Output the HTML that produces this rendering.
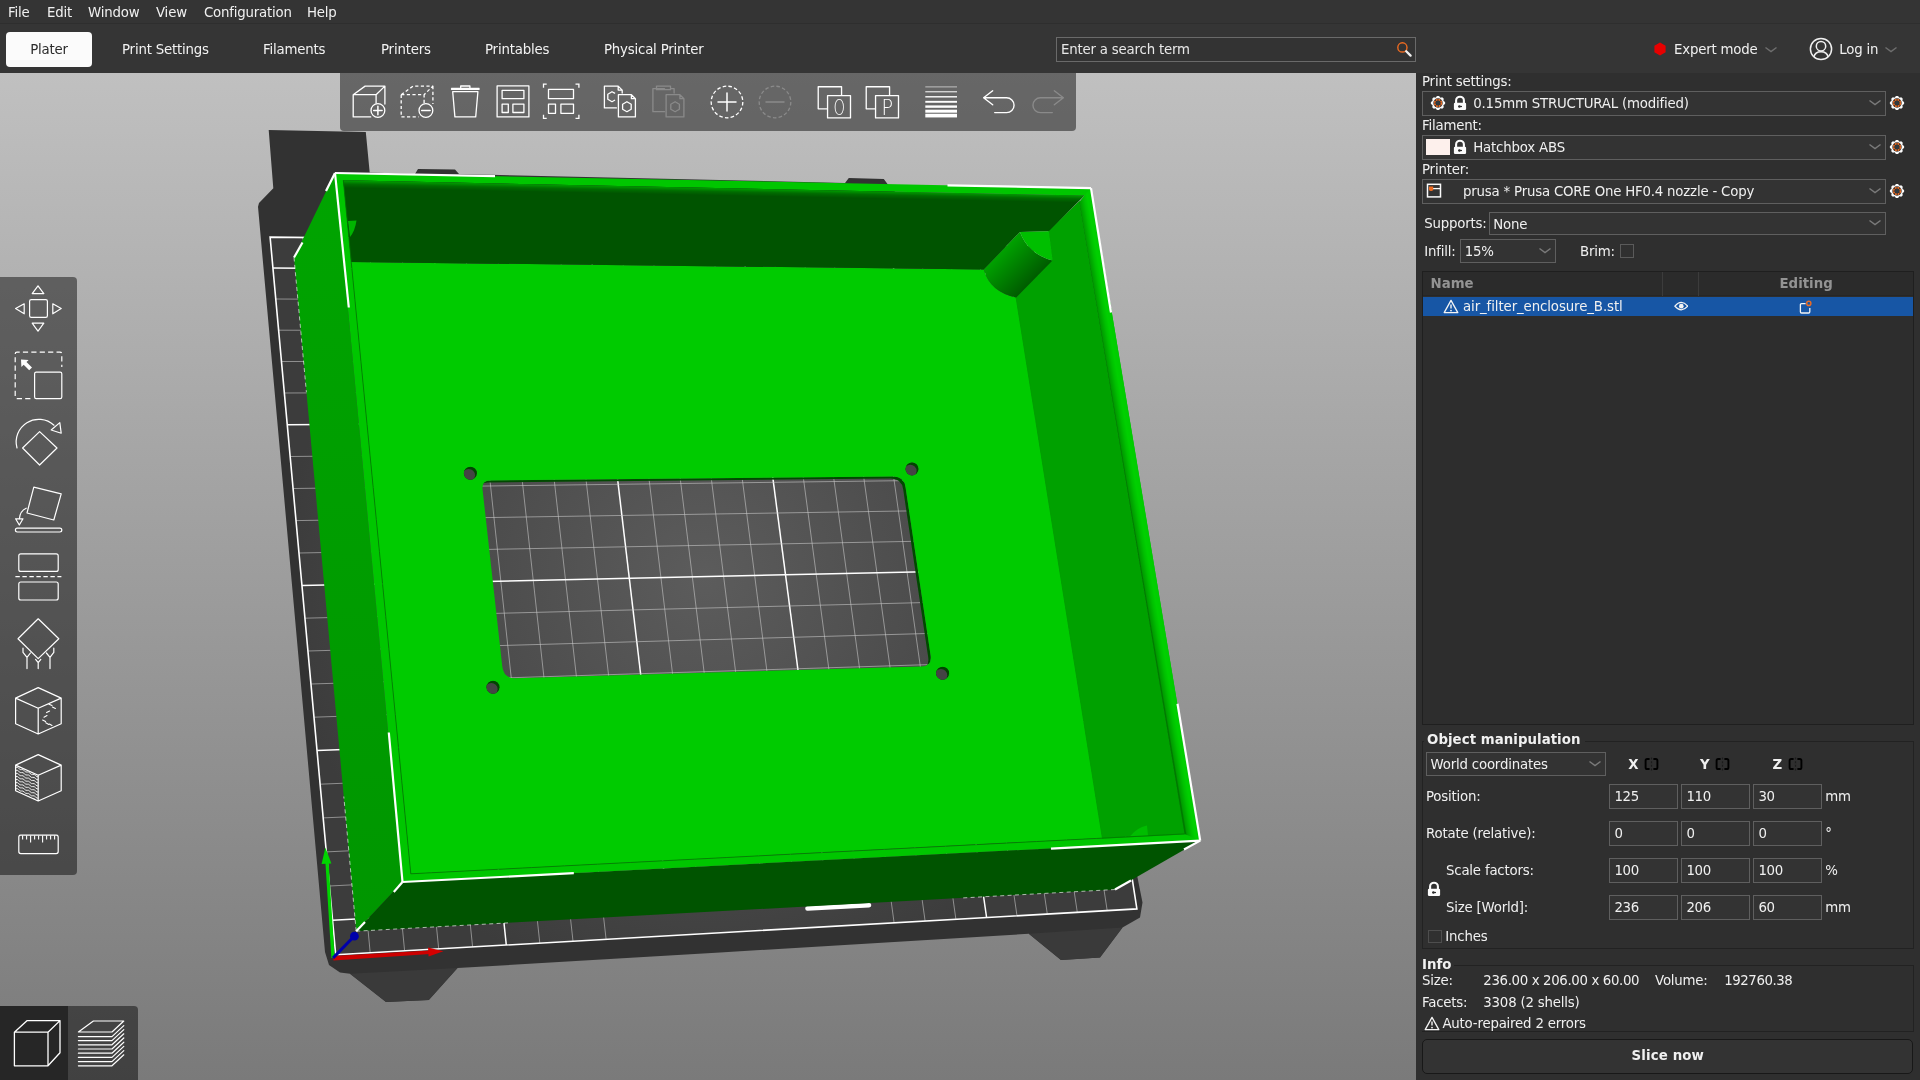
<!DOCTYPE html>
<html><head><meta charset="utf-8"><title>PrusaSlicer</title>
<style>
*{box-sizing:border-box;margin:0;padding:0}
html,body{width:1920px;height:1080px;overflow:hidden;background:#2f2f2f}
body{font-family:"DejaVu Sans","Liberation Sans",sans-serif;font-size:13.333px;letter-spacing:-0.2px;color:#f0f0f0;position:relative}
.abs{position:absolute}
#menubar,#tabbar,#view,#panel{will-change:transform}
#menubar{left:0;top:0;width:1920px;height:24px;background:#343434;border-bottom:1px solid #2e2e2e}
#menubar span{position:absolute;top:5px;line-height:16px;white-space:nowrap}
#tabbar{left:0;top:24px;width:1920px;height:48.7px;background:#353535;z-index:3}
.tab{position:absolute;top:8px;height:35px;line-height:35.8px;text-align:center;white-space:nowrap;color:#f2f2f2}
.tab.sel{background:#fbfbfb;color:#2b2b2b;border-radius:4px}
#view{left:0;top:72px;width:1416px;height:1008px;background:linear-gradient(#c0c0c0,#7a7a7a);overflow:hidden}
#scene{position:absolute;left:0;top:0}
#ttool{left:340px;top:0;width:736px;height:58.5px;background:rgba(0,0,0,.462);border-radius:0 0 4px 4px}
#ltool{left:0;top:205.2px;width:77px;height:598px;background:rgba(0,0,0,.462);border-radius:0 4px 4px 0}
#btool{left:0;top:934px;width:137.5px;height:74px;background:rgba(0,0,0,.462);border-radius:0 4px 0 0;overflow:hidden}
#btool .s{position:absolute;left:0;top:0;width:68px;height:74px;background:#262626}
#panel{left:1416px;top:72px;width:504px;height:1008px;background:#2f2f2f}
.lbl{position:absolute;white-space:nowrap;line-height:16px}
.combo{position:absolute;border:1px solid #5f5f5f;background:#333333;height:24px}
.combo .t{position:absolute;top:3px;line-height:16px;white-space:nowrap}
.inp{position:absolute;border:1px solid #5f5f5f;background:#333333;height:24px;width:70px}
.inp span{position:absolute;left:5px;top:3px;line-height:16px}
.b{font-weight:bold;letter-spacing:0}
.num{letter-spacing:-0.46px}
</style></head><body>
<div id="menubar" class="abs">
<span style="left:8px">File</span><span style="left:47px">Edit</span><span style="left:88px">Window</span><span style="left:156px">View</span><span style="left:204px">Configuration</span><span style="left:307px">Help</span>
</div>
<div id="tabbar" class="abs">
<div class="tab sel" style="left:6px;width:86px">Plater</div>
<div class="tab" style="left:122px">Print Settings</div>
<div class="tab" style="left:263px">Filaments</div>
<div class="tab" style="left:381px">Printers</div>
<div class="tab" style="left:485px">Printables</div>
<div class="tab" style="left:604px">Physical Printer</div>
<div class="abs" style="left:1056px;top:13px;width:360px;height:25px;border:1px solid #6a6a6a;background:#333"><span class="abs" style="left:4px;top:4px;line-height:16px;color:#e8e8e8">Enter a search term</span>
<svg class="abs" style="left:338px;top:2px" width="20" height="20" viewBox="0 0 20 20"><circle cx="7.4" cy="7.4" r="4.6" fill="none" stroke="#ed6b21" stroke-width="1.4"/><line x1="11.2" y1="11.2" x2="15.6" y2="15.6" stroke="#f0f0f0" stroke-width="2.3" stroke-linecap="round"/></svg></div>
<svg class="abs" style="left:1653px;top:18px" width="14" height="14" viewBox="0 0 14 14"><polygon points="7,0.6 12.6,3.8 12.6,10.2 7,13.4 1.4,10.2 1.4,3.8" fill="#e70000"/></svg>
<span class="lbl" style="left:1674px;top:18px">Expert mode</span>
<svg class="abs" style="left:1764px;top:22px" width="14" height="8" viewBox="0 0 14 8"><polyline points="1.5,1.5 7,5.5 12.5,1.5" fill="none" stroke="#6e6e6e" stroke-width="1.5"/></svg>
<svg class="abs" style="left:1808px;top:12px" width="26" height="26" viewBox="0 0 26 26"><circle cx="13" cy="13" r="10.6" fill="none" stroke="#f0f0f0" stroke-width="1.5"/><circle cx="13" cy="10.2" r="4.7" fill="none" stroke="#f0f0f0" stroke-width="1.5"/><path d="M5.9,21 C6.6,17.2 9.2,15.7 13,15.7 C16.8,15.7 19.4,17.2 20.1,21" fill="none" stroke="#f0f0f0" stroke-width="1.5"/></svg>
<span class="lbl" style="left:1839.3px;top:18px">Log in</span>
<svg class="abs" style="left:1884px;top:22px" width="14" height="8" viewBox="0 0 14 8"><polyline points="1.5,1.5 7,5.5 12.5,1.5" fill="none" stroke="#6e6e6e" stroke-width="1.5"/></svg>
</div>
<div id="view" class="abs">
<svg id="scene" width="1416" height="1008" viewBox="0 0 1416 1008">
<defs>
<radialGradient id="bedg" gradientUnits="userSpaceOnUse" cx="705" cy="505" r="420"><stop offset="0" stop-color="#5c5c5c"/><stop offset="0.6" stop-color="#4a4a4a"/><stop offset="1" stop-color="#3c3c3c"/></radialGradient>
<linearGradient id="leftg" x1="0" y1="0" x2="0" y2="1"><stop offset="0" stop-color="#00a400"/><stop offset="1" stop-color="#009600"/></linearGradient>
<linearGradient id="postg" gradientUnits="userSpaceOnUse" x1="1000" y1="175" x2="1040" y2="215"><stop offset="0" stop-color="#00a800"/><stop offset="1" stop-color="#004c00"/></linearGradient>
<linearGradient id="rimr" gradientUnits="userSpaceOnUse" x1="1107.3" y1="298" x2="1120.9" y2="295.7"><stop offset="0" stop-color="#007a00"/><stop offset="0.08" stop-color="#009c00"/><stop offset="0.42" stop-color="#00c000"/><stop offset="0.66" stop-color="#00d000"/><stop offset="1" stop-color="#00cb00"/></linearGradient>
<linearGradient id="bwg" gradientUnits="userSpaceOnUse" x1="700" y1="115.5" x2="699.85" y2="123"><stop offset="0" stop-color="#00a000"/><stop offset="0.5" stop-color="#006c00"/><stop offset="1" stop-color="#005400"/></linearGradient>
<clipPath id="bedclip"><polygon points="335.7,882.8 1136.9,836.9 1033.9,173.5 270.1,165.1"/></clipPath>
</defs>
<polygon points="268.7,58.0 365.8,60.0 369.7,100.5 415.0,102.0 418.0,97.0 455.0,97.5 459.0,102.0 845.0,111.0 848.8,106.0 883.8,107.0 887.5,112.0 1000.0,228.0 1137.5,805.5 1142.5,830.5 1140.0,845.5 1122.5,855.5 1100.0,885.5 1061.0,888.0 1028.8,861.8 720.0,880.5 457.5,896.0 428.8,928.0 386.0,930.0 350.0,901.8 340.0,900.5 329.0,893.0 325.0,880.0 258.0,134.7 259.0,131.0 273.3,116.3" fill="#323232"/>
<polygon points="350.0,901.8 386.0,930.0 428.8,928.0 457.5,896.0" fill="#3a3a3a"/>
<polygon points="1028.8,861.8 1061.0,888.0 1100.0,885.5 1122.5,855.5" fill="#3a3a3a"/>
<polygon points="335.7,882.8 1136.9,836.9 1033.9,173.5 270.1,165.1" fill="url(#bedg)"/>
<g clip-path="url(#bedclip)">
<line x1="370.2" y1="880.8" x2="302.9" y2="165.5" stroke="#c8c8c8" stroke-width="0.8" stroke-opacity="0.75"/>
<line x1="404.6" y1="878.8" x2="335.6" y2="165.9" stroke="#c8c8c8" stroke-width="0.8" stroke-opacity="0.75"/>
<line x1="438.7" y1="876.9" x2="368.0" y2="166.2" stroke="#c8c8c8" stroke-width="0.8" stroke-opacity="0.75"/>
<line x1="472.6" y1="874.9" x2="400.2" y2="166.6" stroke="#c8c8c8" stroke-width="0.8" stroke-opacity="0.75"/>
<line x1="506.3" y1="873.0" x2="432.2" y2="166.9" stroke="#ffffff" stroke-width="1.5" stroke-opacity="1"/>
<line x1="539.8" y1="871.1" x2="464.0" y2="167.3" stroke="#c8c8c8" stroke-width="0.8" stroke-opacity="0.75"/>
<line x1="573.0" y1="869.2" x2="495.7" y2="167.6" stroke="#c8c8c8" stroke-width="0.8" stroke-opacity="0.75"/>
<line x1="606.1" y1="867.3" x2="527.1" y2="168.0" stroke="#c8c8c8" stroke-width="0.8" stroke-opacity="0.75"/>
<line x1="634.2" y1="825.3" x2="558.4" y2="168.3" stroke="#c8c8c8" stroke-width="0.8" stroke-opacity="0.75"/>
<line x1="666.8" y1="823.6" x2="589.4" y2="168.6" stroke="#ffffff" stroke-width="1.5" stroke-opacity="1"/>
<line x1="699.1" y1="821.8" x2="620.3" y2="169.0" stroke="#c8c8c8" stroke-width="0.8" stroke-opacity="0.75"/>
<line x1="731.2" y1="820.1" x2="651.0" y2="169.3" stroke="#c8c8c8" stroke-width="0.8" stroke-opacity="0.75"/>
<line x1="763.1" y1="818.4" x2="681.5" y2="169.6" stroke="#c8c8c8" stroke-width="0.8" stroke-opacity="0.75"/>
<line x1="794.8" y1="816.7" x2="711.9" y2="170.0" stroke="#c8c8c8" stroke-width="0.8" stroke-opacity="0.75"/>
<line x1="826.4" y1="815.1" x2="742.0" y2="170.3" stroke="#ffffff" stroke-width="1.5" stroke-opacity="1"/>
<line x1="857.7" y1="813.4" x2="772.0" y2="170.6" stroke="#c8c8c8" stroke-width="0.8" stroke-opacity="0.75"/>
<line x1="894.1" y1="850.8" x2="801.8" y2="170.9" stroke="#c8c8c8" stroke-width="0.8" stroke-opacity="0.75"/>
<line x1="925.1" y1="849.0" x2="831.4" y2="171.3" stroke="#c8c8c8" stroke-width="0.8" stroke-opacity="0.75"/>
<line x1="955.9" y1="847.3" x2="860.8" y2="171.6" stroke="#c8c8c8" stroke-width="0.8" stroke-opacity="0.75"/>
<line x1="986.6" y1="845.5" x2="890.1" y2="171.9" stroke="#ffffff" stroke-width="1.5" stroke-opacity="1"/>
<line x1="1017.0" y1="843.8" x2="919.2" y2="172.2" stroke="#c8c8c8" stroke-width="0.8" stroke-opacity="0.75"/>
<line x1="1047.3" y1="842.0" x2="948.1" y2="172.5" stroke="#c8c8c8" stroke-width="0.8" stroke-opacity="0.75"/>
<line x1="1077.3" y1="840.3" x2="976.9" y2="172.9" stroke="#c8c8c8" stroke-width="0.8" stroke-opacity="0.75"/>
<line x1="1107.2" y1="838.6" x2="1005.5" y2="173.2" stroke="#c8c8c8" stroke-width="0.8" stroke-opacity="0.75"/>
<line x1="332.5" y1="848.3" x2="1132.0" y2="805.2" stroke="#ffffff" stroke-width="1.5" stroke-opacity="1"/>
<line x1="329.4" y1="814.0" x2="1127.1" y2="773.6" stroke="#c8c8c8" stroke-width="0.8" stroke-opacity="0.75"/>
<line x1="326.3" y1="779.9" x2="1122.2" y2="742.1" stroke="#c8c8c8" stroke-width="0.8" stroke-opacity="0.75"/>
<line x1="323.2" y1="745.9" x2="1117.3" y2="710.9" stroke="#c8c8c8" stroke-width="0.8" stroke-opacity="0.75"/>
<line x1="320.1" y1="712.2" x2="1112.5" y2="679.7" stroke="#c8c8c8" stroke-width="0.8" stroke-opacity="0.75"/>
<line x1="317.0" y1="678.6" x2="1107.7" y2="648.8" stroke="#ffffff" stroke-width="1.5" stroke-opacity="1"/>
<line x1="314.0" y1="645.2" x2="1102.9" y2="618.0" stroke="#c8c8c8" stroke-width="0.8" stroke-opacity="0.75"/>
<line x1="310.9" y1="612.0" x2="1098.1" y2="587.3" stroke="#c8c8c8" stroke-width="0.8" stroke-opacity="0.75"/>
<line x1="307.9" y1="579.0" x2="1093.4" y2="556.8" stroke="#c8c8c8" stroke-width="0.8" stroke-opacity="0.75"/>
<line x1="304.9" y1="546.2" x2="1088.7" y2="526.4" stroke="#c8c8c8" stroke-width="0.8" stroke-opacity="0.75"/>
<line x1="301.9" y1="513.5" x2="1084.0" y2="496.2" stroke="#ffffff" stroke-width="1.5" stroke-opacity="1"/>
<line x1="299.0" y1="481.0" x2="1079.3" y2="466.2" stroke="#c8c8c8" stroke-width="0.8" stroke-opacity="0.75"/>
<line x1="296.0" y1="448.6" x2="1074.7" y2="436.3" stroke="#c8c8c8" stroke-width="0.8" stroke-opacity="0.75"/>
<line x1="293.1" y1="416.5" x2="1070.1" y2="406.5" stroke="#c8c8c8" stroke-width="0.8" stroke-opacity="0.75"/>
<line x1="290.1" y1="384.5" x2="1065.5" y2="376.9" stroke="#c8c8c8" stroke-width="0.8" stroke-opacity="0.75"/>
<line x1="287.2" y1="352.7" x2="1060.9" y2="347.4" stroke="#ffffff" stroke-width="1.5" stroke-opacity="1"/>
<line x1="284.3" y1="321.0" x2="1056.3" y2="318.0" stroke="#c8c8c8" stroke-width="0.8" stroke-opacity="0.75"/>
<line x1="281.5" y1="289.5" x2="1051.8" y2="288.9" stroke="#c8c8c8" stroke-width="0.8" stroke-opacity="0.75"/>
<line x1="278.6" y1="258.2" x2="1047.3" y2="259.8" stroke="#c8c8c8" stroke-width="0.8" stroke-opacity="0.75"/>
<line x1="275.8" y1="227.0" x2="1042.8" y2="230.9" stroke="#c8c8c8" stroke-width="0.8" stroke-opacity="0.75"/>
<line x1="272.9" y1="196.0" x2="1038.4" y2="202.1" stroke="#ffffff" stroke-width="1.5" stroke-opacity="1"/>
</g>
<polygon points="335.7,882.8 1136.9,836.9 1033.9,173.5 270.1,165.1" fill="none" stroke="#fff" stroke-width="1.6"/>
<line x1="807.5" y1="836.4" x2="869" y2="833.2" stroke="#fff" stroke-width="4.6" stroke-linecap="round"/>
<polygon points="335.0,101.0 402.5,810.0 356.2,859.2 294.0,185.5" fill="url(#leftg)"/>
<polygon points="402.5,810.0 1200.2,768.6 1115.0,817.5 356.2,859.2" fill="#005400"/>
<path d="M335.0,101.0 1091.0,116.1 1200.2,768.6 402.5,810.0 Z M343.3,108.3 1084.4,123.6 1184.5,761.9 410.8,801.8 Z" fill="#00c600" fill-rule="evenodd"/>
<clipPath id="cutc"><path d="M482.5,417.0 Q481.6,408.6 490.1,408.5 L893.0,404.6 Q904.0,404.5 905.6,415.4 L930.6,583.3 Q932.2,594.2 921.2,594.5 L515.6,606.2 Q503.6,606.5 502.3,594.6 Z"/></clipPath>
<g clip-path="url(#cutc)"><path d="M0,0 H1416 V1008 H0 Z M480.1,419.0 Q479.2,410.6 487.7,410.5 L890.6,406.6 Q901.6,406.5 903.2,417.4 L928.2,585.3 Q929.8,596.2 918.8,596.5 L513.2,608.2 Q501.2,608.5 499.9,596.6 Z" fill-rule="evenodd" fill="#004a00"/></g>
<path d="M351.2,190.0 L983.8,197.5 Q990.0,220.0 1016.2,225.5 L1102.5,766.0 L410.8,801.8 Z M482.5,417.0 Q481.6,408.6 490.1,408.5 L893.0,404.6 Q904.0,404.5 905.6,415.4 L930.6,583.3 Q932.2,594.2 921.2,594.5 L515.6,606.2 Q503.6,606.5 502.3,594.6 Z M464.1,401.2 a6.3,6.3 0 1,0 12.6,0 a6.3,6.3 0 1,0 -12.6,0 Z M905.7,396.9 a6.3,6.3 0 1,0 12.6,0 a6.3,6.3 0 1,0 -12.6,0 Z M486.7,615.2 a6.3,6.3 0 1,0 12.6,0 a6.3,6.3 0 1,0 -12.6,0 Z M936.3,601.2 a6.3,6.3 0 1,0 12.6,0 a6.3,6.3 0 1,0 -12.6,0 Z" fill="#00cb00" fill-rule="evenodd"/>
<clipPath id="hc0"><circle cx="470.4" cy="401.2" r="6.5"/></clipPath>
<g clip-path="url(#hc0)"><circle cx="470.4" cy="401.2" r="7" fill="#004600"/><circle cx="468.7" cy="403.3" r="6.3" fill="#444444"/></g>
<clipPath id="hc1"><circle cx="912.0" cy="396.9" r="6.5"/></clipPath>
<g clip-path="url(#hc1)"><circle cx="912.0" cy="396.9" r="7" fill="#004600"/><circle cx="910.3" cy="399.0" r="6.3" fill="#444444"/></g>
<clipPath id="hc2"><circle cx="493.0" cy="615.2" r="6.5"/></clipPath>
<g clip-path="url(#hc2)"><circle cx="493.0" cy="615.2" r="7" fill="#004600"/><circle cx="491.3" cy="617.3" r="6.3" fill="#444444"/></g>
<clipPath id="hc3"><circle cx="942.6" cy="601.2" r="6.5"/></clipPath>
<g clip-path="url(#hc3)"><circle cx="942.6" cy="601.2" r="7" fill="#004600"/><circle cx="940.9" cy="603.3" r="6.3" fill="#444444"/></g>
<polygon points="1079.3,129.9 1184.5,761.9 1102.5,766.0 1016.2,225.5 1052.5,188.5 1048.8,159.2" fill="#00a100" stroke="#00a100" stroke-width="1.2"/>
<polygon points="343.3,108.3 1084.4,123.6 1048.8,159.2 1020.0,160.0 983.8,197.5 351.2,190.0" fill="#005400"/>
<polygon points="343.3,108.3 1084.4,123.6 1076.0,131.0 344.2,116.0" fill="url(#bwg)"/>
<polygon points="1079.3,129.9 1084.4,123.6 1091.0,116.1 1200.2,768.6 1184.5,761.9" fill="url(#rimr)"/>
<path d="M1020.0,160.0 L983.8,197.5 Q990.0,220.0 1016.2,225.5 L1052.5,188.5 Q1028.0,182.0 1020.0,160.0 Z" fill="url(#postg)"/>
<path d="M1020.0,160.0 L1048.8,159.2 L1052.5,188.5 Q1028.0,182.0 1020.0,160.0 Z" fill="#00bf00"/>
<path d="M348.0,149.0 L356.5,148.5 Q355.0,159.0 350.0,165.0 Z" fill="#00b400"/>
<path d="M1130.0,764.6 Q1136.0,756.0 1147.0,753.5 L1148.0,763.7 Z" fill="#00bd00"/>
<polyline points="343.3,108.3 410.8,801.8 1184.5,761.9" fill="none" stroke="#007a00" stroke-width="0.8"/>
<line x1="335.0" y1="101.0" x2="495.0" y2="104.2" stroke="#fff" stroke-width="2.2" stroke-linecap="butt"/>
<line x1="335.0" y1="101.0" x2="348.8" y2="235.5" stroke="#fff" stroke-width="2.2" stroke-linecap="butt"/>
<line x1="335.0" y1="101.0" x2="326.0" y2="119.0" stroke="#fff" stroke-width="2.2" stroke-linecap="butt"/>
<line x1="1091.0" y1="116.1" x2="947.5" y2="113.3" stroke="#fff" stroke-width="2.2" stroke-linecap="butt"/>
<line x1="1091.0" y1="116.1" x2="1111.0" y2="240.5" stroke="#fff" stroke-width="2.2" stroke-linecap="butt"/>
<line x1="1200.2" y1="768.6" x2="1177.5" y2="631.8" stroke="#fff" stroke-width="2.2" stroke-linecap="butt"/>
<line x1="1200.2" y1="768.6" x2="1051.0" y2="776.6" stroke="#fff" stroke-width="2.2" stroke-linecap="butt"/>
<line x1="1200.2" y1="768.6" x2="1184.0" y2="777.5" stroke="#fff" stroke-width="2.2" stroke-linecap="butt"/>
<line x1="402.5" y1="810.0" x2="388.8" y2="660.5" stroke="#fff" stroke-width="2.2" stroke-linecap="butt"/>
<line x1="402.5" y1="810.0" x2="573.8" y2="801.2" stroke="#fff" stroke-width="2.2" stroke-linecap="butt"/>
<line x1="402.5" y1="810.0" x2="393.8" y2="820.0" stroke="#fff" stroke-width="2.2" stroke-linecap="butt"/>
<line x1="356.2" y1="859.2" x2="365.0" y2="850.0" stroke="#fff" stroke-width="2.2" stroke-linecap="butt"/>
<line x1="1115.0" y1="817.5" x2="1131.0" y2="808.5" stroke="#fff" stroke-width="2.2" stroke-linecap="butt"/>
<line x1="294.0" y1="185.5" x2="302.5" y2="170.5" stroke="#fff" stroke-width="2.2" stroke-linecap="butt"/>
<line x1="294.0" y1="185.5" x2="306.4" y2="320.2" stroke="#fff" stroke-width="0.9" stroke-dasharray="4 3.4" stroke-opacity="0.7"/>
<line x1="356.2" y1="859.2" x2="343.8" y2="724.5" stroke="#fff" stroke-width="0.9" stroke-dasharray="4 3.4" stroke-opacity="0.7"/>
<line x1="356.2" y1="859.2" x2="508.0" y2="850.9" stroke="#fff" stroke-width="0.9" stroke-dasharray="4 3.4" stroke-opacity="0.7"/>
<line x1="1115.0" y1="817.5" x2="963.2" y2="825.9" stroke="#fff" stroke-width="0.9" stroke-dasharray="4 3.4" stroke-opacity="0.7"/>
<polygon points="333.1,883.9 430.0,878.4 430.2,882.0 333.5,888.6" fill="#cc0000"/>
<polygon points="428.0,875.6 443.4,879.2 428.6,884.4" fill="#d40000"/>
<line x1="333" y1="886" x2="327" y2="790" stroke="#00d400" stroke-width="3.2"/>
<polygon points="321.6,792.0 325.4,775.5 331.4,791.4" fill="#00d400"/>
<line x1="333" y1="886" x2="353" y2="865.5" stroke="#0000aa" stroke-width="3.2"/>
<circle cx="354.4" cy="864.2" r="4.4" fill="#0000aa"/>
</svg>
<div id="ttool" class="abs"></div>
<div id="ltool" class="abs"></div>
<div id="btool" class="abs"><div class="s"></div></div>
<svg class="abs" style="left:0;top:0" width="1416" height="1008" viewBox="0 72 1416 1008" fill="none" stroke="#fff" stroke-width="1.3" stroke-linejoin="round" stroke-linecap="round">
<g transform="translate(352.5,85.1)" ><path d="M0.7,9.6 H23.6 V18 M0.7,9.6 V31.8 H18.2 M0.7,9.6 L12.6,1 H32.4 L23.6,9.6 M32.4,1 V19"/><circle cx="25.4" cy="25.4" r="6.9"/><path d="M25.4,21.2 V29.6 M21.2,25.4 H29.6" stroke-width="1.5"/></g>
<g transform="translate(400.5,85.1)" ><path d="M0.7,9.6 H23.6 V18 M0.7,9.6 V31.8 H18.2 M0.7,9.6 L12.6,1 H32.4 L23.6,9.6 M32.4,1 V19" stroke-dasharray="3.2 2.4" stroke-linecap="butt"/><circle cx="25.4" cy="25.4" r="6.9"/><path d="M21.2,25.4 H29.6" stroke-width="1.5"/></g>
<g transform="translate(448.5,85.1)" ><path d="M3,4.2 H30.6 M12.2,2.6 V0.9 H21.4 V2.6 M4.2,6.6 H29.4 L27.2,31.8 H6.4 Z"/><path d="M3,3.2 H30.6" /></g>
<g transform="translate(496.5,85.1)" ><rect x="0.6" y="0.8" width="31.8" height="31"/><rect x="5.6" y="5.2" width="21.8" height="8.4"/><rect x="5.6" y="19" width="6.2" height="8.4"/><rect x="16.4" y="19" width="11" height="8.4"/></g>
<g transform="translate(544.5,85.1)" ><path d="M-1,2.6 V-1 H2.2 M31,-1 H34.4 V2.6 M34.4,29.6 V33.2 H31 M2.2,33.2 H-1 V29.6" stroke-linecap="butt" stroke-linejoin="miter"/><rect x="4" y="4.2" width="25" height="9.4"/><rect x="4" y="19" width="7" height="9.2"/><rect x="16.4" y="19" width="12.6" height="9.2"/></g>
<g transform="translate(603,85.1)" stroke="#fff"><path d="M13.4,22.8 H1.4 V1 H15.2 L19.2,5 V8 M15.2,1 V5 H19.2"/><path d="M11.6,8 L9,6.6 L4.8,9.1 V14.1 L9,16.6 L11.6,15.2"/><path d="M15.4,9.6 H28.4 L32.4,13.6 V31.8 H15.4 Z M28.4,9.6 V13.6 H32.4"/><polygon points="23.9,16.6 28.2,19.1 28.2,24.1 23.9,26.6 19.6,24.1 19.6,19.1"/></g>
<g transform="translate(651.5,85.1)" stroke="#8a8a8a"><path d="M13,3.6 H1.4 V26.6 H13 M19,3.6 H22.6 V8 M5,1 H19 V4.6 H5 Z"/><path d="M14.6,9.6 H28.4 L32.4,13.6 V31.8 H14.6 Z M28.4,9.6 V13.6 H32.4"/><polygon points="23.6,16.6 27.9,19.1 27.9,24.1 23.6,26.6 19.3,24.1 19.3,19.1"/></g>
<g transform="translate(727,102)" ><circle r="15.8" stroke-dasharray="3.6 2.2" stroke-linecap="butt"/><path d="M0,-9 V9 M-9,0 H9" stroke-width="1.5"/></g>
<g transform="translate(775,102)" stroke="#8a8a8a"><circle r="15.8" stroke-dasharray="3.6 2.2" stroke-linecap="butt"/><path d="M-9,0 H9" stroke-width="1.5"/></g>
<g transform="translate(817,85.6)" ><g transform="scale(1.015)"><path d="M9.6,22.9 H1.2 V1.1 H24.2 V9.6"/><rect x="10.4" y="9.8" width="22.6" height="22"/><text x="21.8" y="28.7" text-anchor="middle" font-family="DejaVu Sans,Liberation Sans,sans-serif" font-weight="200" font-size="21" fill="#fff" stroke="none" textLength="11.2" lengthAdjust="spacingAndGlyphs">O</text></g></g>
<g transform="translate(865,85.6)" ><g transform="scale(1.015)"><path d="M9.6,22.9 H1.2 V1.1 H24.2 V9.6"/><rect x="10.4" y="9.8" width="22.6" height="22"/><text x="21.8" y="28.7" text-anchor="middle" font-family="DejaVu Sans,Liberation Sans,sans-serif" font-weight="200" font-size="21" fill="#fff" stroke="none" textLength="11.2" lengthAdjust="spacingAndGlyphs">P</text></g></g>
<g stroke-linecap="butt"><line x1="925.3" x2="957" y1="86.9" y2="86.9" stroke-width="0.6"/><line x1="925.3" x2="957" y1="91.8" y2="91.8" stroke-width="1.0"/><line x1="925.3" x2="957" y1="96.8" y2="96.8" stroke-width="1.4"/><line x1="925.3" x2="957" y1="101.8" y2="101.8" stroke-width="1.9"/><line x1="925.3" x2="957" y1="106.6" y2="106.6" stroke-width="2.4"/><line x1="925.3" x2="957" y1="111.2" y2="111.2" stroke-width="3.0"/><line x1="925.3" x2="957" y1="115.6" y2="115.6" stroke-width="3.7"/></g>
<path d="M992.7,90.8 L983.6,97.7 L992.7,104.7 M983.6,97.7 H1006.6 A7.45,7.45 0 0 1 1006.6,112.6 H994.7" stroke-width="1.4"/>
<path d="M1054.3,90.8 L1063.4,97.7 L1054.3,104.7 M1063.4,97.7 H1040.4 A7.45,7.45 0 0 0 1040.4,112.6 H1052.3" stroke-width="1.4" stroke="#8a8a8a"/><g stroke-width="1.2">
<rect x="29.6" y="299.6" width="17.8" height="17.8" rx="1.6"/>
<path d="M38,285.8 L43.8,293.6 H32.2 Z M38,331.2 L43.8,323.2 H32.2 Z M15.6,308.6 L24.2,303.8 V313.8 Z M61.2,308.6 L52.8,303.8 V313.8 Z"/>
<path d="M30.4,398.6 H17 Q15.2,398.6 15.2,396.8 V354 Q15.2,352.2 17,352.2 H60 Q61.8,352.2 61.8,354 V367" stroke-dasharray="5.2 3.2" stroke-linecap="butt"/>
<rect x="34.6" y="372.2" width="27.2" height="26.4" rx="1.6"/>
<path d="M21,359.6 L28.6,359.9 L26.5,362.1 L32,367.4 L29.2,370.2 L23.7,364.8 L21.4,367 Z" fill="#fff" stroke="none"/>
<path d="M39.6,431.6 L57,448 L39.6,465 L22.6,448 Z"/>
<path d="M17,448 A22.6,22.6 0 0 1 54,425.2"/><path d="M51.2,430 L59.8,422.6 L61.2,433.2 Z"/>
<path d="M33.8,487.2 L61.2,493.8 L53.8,520 L27,513 Z"/><rect x="15.4" y="528.2" width="46.4" height="3.8" rx="1.9"/>
<path d="M26.2,508.2 Q20,511 19.4,518.6"/><path d="M15.6,518.8 H23 L19.3,525 Z"/>
<rect x="18.8" y="553.8" width="39.4" height="17.6" rx="2"/><rect x="18.8" y="582" width="39.4" height="18" rx="2"/><path d="M15.4,576.6 H61.4" stroke-dasharray="4.4 2.6" stroke-linecap="butt"/>
<path d="M38.2,618.8 L58.8,638.8 L38.2,658.6 L18,638.8 Z"/>
<path d="M27,668.6 V657.4 L23,652.4 V648.2 M27,657.4 L30.4,653 M38.2,668.6 V662.6 M35.6,659.4 L38.2,662.6 L40.8,659.4 M50,668.6 V657.4 L53.8,652.4 V648.2 M50,657.4 L46.4,653"/>
<path d="M38.2,687.6 L61.2,698.1 V723.8000000000001 L38.2,734.0 L15.6,723.8000000000001 V698.1 Z M15.6,698.1 L38.2,708.2 L61.2,698.1 M38.2,708.2 V734.0"/>
<path d="M49,704.2 l3,1.4 M52.4,707 l3,1.4 M49.6,711 l-3,1.6 M47,715.6 l-3,1.6 M42.6,720 l3,1.6 M45.8,722.8 l3,1.6 M49.4,724 l2.6,1.4" stroke-width="1.1"/>
<path d="M38.2,754.6 L61.2,765.1 V790.8000000000001 L38.2,801.0 L15.6,790.8000000000001 V765.1 Z M15.6,765.1 L38.2,775.2 L61.2,765.1 M38.2,775.2 V801.0"/>
<clipPath id="mmuc"><path d="M15.6,765.1 L38.2,775.2 V801 L15.6,790.8 Z"/></clipPath><path d="M16,767.2 q1.4,-0.5 2.8,1.2 t2.8,1.2 t2.8,1.2 t2.8,1.2 t2.8,1.2 t2.8,1.2 t2.8,1.2 t2.6,1.2 M16,770.2 q1.4,-0.5 2.8,1.2 t2.8,1.2 t2.8,1.2 t2.8,1.2 t2.8,1.2 t2.8,1.2 t2.8,1.2 t2.6,1.2 M16,773.3 q1.4,-0.5 2.8,1.2 t2.8,1.2 t2.8,1.2 t2.8,1.2 t2.8,1.2 t2.8,1.2 t2.8,1.2 t2.6,1.2 M16,776.4 q1.4,-0.5 2.8,1.2 t2.8,1.2 t2.8,1.2 t2.8,1.2 t2.8,1.2 t2.8,1.2 t2.8,1.2 t2.6,1.2 M16,779.4 q1.4,-0.5 2.8,1.2 t2.8,1.2 t2.8,1.2 t2.8,1.2 t2.8,1.2 t2.8,1.2 t2.8,1.2 t2.6,1.2 M16,782.5 q1.4,-0.5 2.8,1.2 t2.8,1.2 t2.8,1.2 t2.8,1.2 t2.8,1.2 t2.8,1.2 t2.8,1.2 t2.6,1.2 M16,785.5 q1.4,-0.5 2.8,1.2 t2.8,1.2 t2.8,1.2 t2.8,1.2 t2.8,1.2 t2.8,1.2 t2.8,1.2 t2.6,1.2 M16,788.6 q1.4,-0.5 2.8,1.2 t2.8,1.2 t2.8,1.2 t2.8,1.2 t2.8,1.2 t2.8,1.2 t2.8,1.2 t2.6,1.2 M16,791.6 q1.4,-0.5 2.8,1.2 t2.8,1.2 t2.8,1.2 t2.8,1.2 t2.8,1.2 t2.8,1.2 t2.8,1.2 t2.6,1.2 " stroke-width="0.9" clip-path="url(#mmuc)"/>
<rect x="18.8" y="835.2" width="39.4" height="18.4" rx="2"/><path d="M22.6,835.6 v4 M26.6,835.6 v4 M30.6,835.6 v7 M34.6,835.6 v4 M38.6,835.6 v4 M42.6,835.6 v7 M46.6,835.6 v4 M50.6,835.6 v4 M54.6,835.6 v4" stroke-width="1.1" stroke-linecap="butt"/>
<path d="M14.4,1032.2 H48 V1065.8 H14.4 Z M14.4,1032.2 L27.2,1020.6 H60 L48,1032.2 M60,1020.6 V1052.8 L48,1065.8" stroke-width="1.3"/>
<path d="M78.4,1032 L93.4,1021 H123.8 L112,1032 Z" stroke-width="1.2"/>
<path d="M78.4,1036.6 H112 L123.8,1025.6 M78.4,1040.6 H112 L123.8,1029.6 M78.4,1044.8 H112 L123.8,1033.8 M78.4,1049 H112 L123.8,1038.0 M78.4,1053.2 H112 L123.8,1042.2 M78.4,1057.4 H112 L123.8,1046.4 M78.4,1061.6 H112 L123.8,1050.6 M78.4,1065.8 H112 L123.8,1054.8" stroke-width="1.2"/>
</g>
</svg>
</div>
<div id="panel" class="abs">
<span class="lbl " style="left:6.0px;top:2.1px;">Print settings:</span>
<div class="combo" style="left:6.0px;top:19.0px;width:464.0px;height:24.5px"><span class="t" style="left:50.3px;top:4.3px">0.15mm STRUCTURAL (modified)</span><svg class="abs" style="left:445px;top:7.2px" width="14" height="8" viewBox="0 0 14 8"><polyline points="1.5,1.5 7,5.6 12.5,1.5" fill="none" stroke="#7a7a7a" stroke-width="1.5"/></svg></div>
<svg class="abs" style="left:13.0px;top:22.1px" width="18" height="18" viewBox="-9 -9 18 18"><g fill="#fbfbfb"><polygon points="-2.1,-5.5 -1.1,-7.1 1.1,-7.1 2.1,-5.5 2.1,5.5 1.1,7.1 -1.1,7.1 -2.1,5.5" transform="rotate(0)"/><polygon points="-2.1,-5.5 -1.1,-7.1 1.1,-7.1 2.1,-5.5 2.1,5.5 1.1,7.1 -1.1,7.1 -2.1,5.5" transform="rotate(45)"/><polygon points="-2.1,-5.5 -1.1,-7.1 1.1,-7.1 2.1,-5.5 2.1,5.5 1.1,7.1 -1.1,7.1 -2.1,5.5" transform="rotate(90)"/><polygon points="-2.1,-5.5 -1.1,-7.1 1.1,-7.1 2.1,-5.5 2.1,5.5 1.1,7.1 -1.1,7.1 -2.1,5.5" transform="rotate(135)"/><circle r="5.8"/></g><circle r="4.7" fill="#2b2f31"/><circle r="3.4" fill="none" stroke="#ed6b21" stroke-width="1.7" stroke-dasharray="1.9 0.77"/><circle r="2.3" fill="#2f3a40"/></svg>
<svg class="abs" style="left:37.0px;top:23.0px" width="14" height="16" viewBox="0 0 14 16"><path d="M3.1,8.4 V5.6 A3.9,3.9 0 0 1 10.9,5.6 V8.4" fill="none" stroke="#fbfbfb" stroke-width="2.1"/><rect x="0.9" y="7.7" width="12.2" height="7.3" rx="1.2" fill="#fbfbfb"/><path d="M5.4,11.5 H9" stroke="#2d2d2d" stroke-width="1.2"/><circle cx="6.4" cy="11.5" r="1.2" fill="#2d2d2d"/></svg>
<svg class="abs" style="left:471.8px;top:22.2px" width="18" height="18" viewBox="-9 -9 18 18"><g fill="#fbfbfb"><polygon points="-2.1,-5.5 -1.1,-7.1 1.1,-7.1 2.1,-5.5 2.1,5.5 1.1,7.1 -1.1,7.1 -2.1,5.5" transform="rotate(0)"/><polygon points="-2.1,-5.5 -1.1,-7.1 1.1,-7.1 2.1,-5.5 2.1,5.5 1.1,7.1 -1.1,7.1 -2.1,5.5" transform="rotate(45)"/><polygon points="-2.1,-5.5 -1.1,-7.1 1.1,-7.1 2.1,-5.5 2.1,5.5 1.1,7.1 -1.1,7.1 -2.1,5.5" transform="rotate(90)"/><polygon points="-2.1,-5.5 -1.1,-7.1 1.1,-7.1 2.1,-5.5 2.1,5.5 1.1,7.1 -1.1,7.1 -2.1,5.5" transform="rotate(135)"/><circle r="5.8"/></g><circle r="4.7" fill="#2b2f31"/><circle r="3.4" fill="none" stroke="#ed6b21" stroke-width="1.7" stroke-dasharray="1.9 0.77"/><circle r="2.3" fill="#2f3a40"/></svg>
<span class="lbl " style="left:6.0px;top:46.1px;">Filament:</span>
<div class="combo" style="left:6.0px;top:63.0px;width:464.0px;height:24.5px"><span class="t" style="left:50.3px;top:4.3px">Hatchbox ABS</span><svg class="abs" style="left:445px;top:7.2px" width="14" height="8" viewBox="0 0 14 8"><polyline points="1.5,1.5 7,5.6 12.5,1.5" fill="none" stroke="#7a7a7a" stroke-width="1.5"/></svg></div>
<div class="abs" style="left:10px;top:67px;width:24px;height:16px;background:#fdf0ec"></div>
<svg class="abs" style="left:37.0px;top:67.0px" width="14" height="16" viewBox="0 0 14 16"><path d="M3.1,8.4 V5.6 A3.9,3.9 0 0 1 10.9,5.6 V8.4" fill="none" stroke="#fbfbfb" stroke-width="2.1"/><rect x="0.9" y="7.7" width="12.2" height="7.3" rx="1.2" fill="#fbfbfb"/><path d="M5.4,11.5 H9" stroke="#2d2d2d" stroke-width="1.2"/><circle cx="6.4" cy="11.5" r="1.2" fill="#2d2d2d"/></svg>
<svg class="abs" style="left:471.8px;top:66.2px" width="18" height="18" viewBox="-9 -9 18 18"><g fill="#fbfbfb"><polygon points="-2.1,-5.5 -1.1,-7.1 1.1,-7.1 2.1,-5.5 2.1,5.5 1.1,7.1 -1.1,7.1 -2.1,5.5" transform="rotate(0)"/><polygon points="-2.1,-5.5 -1.1,-7.1 1.1,-7.1 2.1,-5.5 2.1,5.5 1.1,7.1 -1.1,7.1 -2.1,5.5" transform="rotate(45)"/><polygon points="-2.1,-5.5 -1.1,-7.1 1.1,-7.1 2.1,-5.5 2.1,5.5 1.1,7.1 -1.1,7.1 -2.1,5.5" transform="rotate(90)"/><polygon points="-2.1,-5.5 -1.1,-7.1 1.1,-7.1 2.1,-5.5 2.1,5.5 1.1,7.1 -1.1,7.1 -2.1,5.5" transform="rotate(135)"/><circle r="5.8"/></g><circle r="4.7" fill="#2b2f31"/><circle r="3.4" fill="none" stroke="#ed6b21" stroke-width="1.7" stroke-dasharray="1.9 0.77"/><circle r="2.3" fill="#2f3a40"/></svg>
<span class="lbl " style="left:6.0px;top:90.1px;">Printer:</span>
<div class="combo" style="left:6.0px;top:107.0px;width:464.0px;height:24.5px"><span class="t" style="left:40.0px;top:4.3px">prusa * Prusa CORE One HF0.4 nozzle - Copy</span><svg class="abs" style="left:445px;top:7.2px" width="14" height="8" viewBox="0 0 14 8"><polyline points="1.5,1.5 7,5.6 12.5,1.5" fill="none" stroke="#7a7a7a" stroke-width="1.5"/></svg></div>
<svg class="abs" style="left:10px;top:111.4px" width="16" height="16" viewBox="0 0 16 16"><rect x="1.5" y="1.3" width="13" height="12.6" fill="none" stroke="#fbfbfb" stroke-width="1.5"/><line x1="6" y1="5.6" x2="14.5" y2="5.6" stroke="#fbfbfb" stroke-width="1.3"/><path d="M3,3.5 H7.2 V7.2 L5.6,8 H4.6 L3,7.2 Z" fill="#ed6b21"/></svg>
<svg class="abs" style="left:471.8px;top:110.2px" width="18" height="18" viewBox="-9 -9 18 18"><g fill="#fbfbfb"><polygon points="-2.1,-5.5 -1.1,-7.1 1.1,-7.1 2.1,-5.5 2.1,5.5 1.1,7.1 -1.1,7.1 -2.1,5.5" transform="rotate(0)"/><polygon points="-2.1,-5.5 -1.1,-7.1 1.1,-7.1 2.1,-5.5 2.1,5.5 1.1,7.1 -1.1,7.1 -2.1,5.5" transform="rotate(45)"/><polygon points="-2.1,-5.5 -1.1,-7.1 1.1,-7.1 2.1,-5.5 2.1,5.5 1.1,7.1 -1.1,7.1 -2.1,5.5" transform="rotate(90)"/><polygon points="-2.1,-5.5 -1.1,-7.1 1.1,-7.1 2.1,-5.5 2.1,5.5 1.1,7.1 -1.1,7.1 -2.1,5.5" transform="rotate(135)"/><circle r="5.8"/></g><circle r="4.7" fill="#2b2f31"/><circle r="3.4" fill="none" stroke="#ed6b21" stroke-width="1.7" stroke-dasharray="1.9 0.77"/><circle r="2.3" fill="#2f3a40"/></svg>
<span class="lbl " style="left:8.2px;top:143.8px;">Supports:</span>
<div class="combo" style="left:73.0px;top:139.6px;width:397.0px;height:23.8px"><span class="t" style="left:3.3px;top:4.0px">None</span><svg class="abs" style="left:378px;top:6.9px" width="14" height="8" viewBox="0 0 14 8"><polyline points="1.5,1.5 7,5.6 12.5,1.5" fill="none" stroke="#7a7a7a" stroke-width="1.5"/></svg></div>
<span class="lbl " style="left:8.2px;top:171.8px;">Infill:</span>
<div class="combo" style="left:44.0px;top:167.2px;width:95.5px;height:24.2px"><span class="t" style="left:3.8px;top:4.2px">15%</span><svg class="abs" style="left:76.5px;top:7.1px" width="14" height="8" viewBox="0 0 14 8"><polyline points="1.5,1.5 7,5.6 12.5,1.5" fill="none" stroke="#7a7a7a" stroke-width="1.5"/></svg></div>
<span class="lbl " style="left:164.0px;top:171.8px;">Brim:</span>
<div class="abs" style="left:204px;top:172px;width:14px;height:14px;border:1px solid #5a5a5a;background:#303030"></div>
<div class="abs" style="left:6px;top:199px;width:492px;height:453.5px;border:1px solid #1f1f1f;background:#2d2d2d"></div>
<div class="abs" style="left:7px;top:200px;width:490px;height:24px;background:#2b2b2b;border-bottom:1px solid #262626"></div>
<div class="abs" style="left:246px;top:200px;width:1px;height:24px;background:#3c3c3c"></div><div class="abs" style="left:282px;top:200px;width:1px;height:24px;background:#3c3c3c"></div>
<span class="lbl b" style="left:14.5px;top:203.9px;color:#939393">Name</span>
<span class="lbl b" style="left:363.5px;top:203.9px;color:#939393">Editing</span>
<div class="abs" style="left:7px;top:224.8px;width:490px;height:19px;background:#1756a5"></div>
<svg class="abs" style="left:27px;top:226.60000000000002px" width="16" height="15" viewBox="0 0 16 15"><path d="M8,1.4 L14.8,13.6 H1.2 Z" fill="none" stroke="#f4f4f4" stroke-width="1.3" stroke-linejoin="round"/><path d="M8,5.6 V9.6" stroke="#f4f4f4" stroke-width="1.4"/><circle cx="8" cy="11.6" r="0.9" fill="#f4f4f4"/></svg>
<span class="lbl " style="left:47.0px;top:227.4px;letter-spacing:-0.1px">air_filter_enclosure_B.stl</span>
<svg class="abs" style="left:257.5999999999999px;top:228.60000000000002px" width="14.6" height="10.3" viewBox="0 0 17 12"><path d="M1,6 Q8.5,-2.6 16,6 Q8.5,14.6 1,6 Z" fill="none" stroke="#f4f4f4" stroke-width="1.5"/><circle cx="8.5" cy="6" r="2.7" fill="#f4f4f4"/></svg>
<svg class="abs" style="left:382px;top:226.5px" width="16" height="16" viewBox="0 0 16 16"><path d="M7.6,4.6 H3.6 Q2.4,4.6 2.4,5.8 V12.8 Q2.4,14 3.6,14 H10.6 Q11.8,14 11.8,12.8 V9" fill="none" stroke="#f4f4f4" stroke-width="1.3"/><circle cx="10.8" cy="4.4" r="2.1" fill="none" stroke="#ed6b21" stroke-width="1.4"/></svg>
<div class="abs" style="left:6px;top:669px;width:492px;height:207.5px;border:1px solid #222222"></div>
<span class="lbl b" style="left:8px;top:660px;background:#2f2f2f;padding:0 5px 0 3px;letter-spacing:0.05px">Object manipulation</span>
<div class="combo" style="left:10.0px;top:680.3px;width:180.0px;height:24.2px"><span class="t" style="left:3.6px;top:4.2px">World coordinates</span><svg class="abs" style="left:161px;top:7.1px" width="14" height="8" viewBox="0 0 14 8"><polyline points="1.5,1.5 7,5.6 12.5,1.5" fill="none" stroke="#7a7a7a" stroke-width="1.5"/></svg></div>
<span class="lbl b" style="left:212.3px;top:685.1px;">X</span>
<svg class="abs" style="left:227.70000000000005px;top:685px" width="15" height="14" viewBox="0 0 15 14"><path d="M5.6,2 H3.2 Q1.6,2 1.6,3.6 V10.4 Q1.6,12 3.2,12 H5.6 M9.4,2 H11.8 Q13.4,2 13.4,3.6 V10.4 Q13.4,12 11.8,12 H9.4" fill="none" stroke="#000" stroke-width="1.9"/><path d="M7.5,0.6 V13.4" stroke="#1c1c1c" stroke-width="1.2" stroke-dasharray="2 1.6"/></svg>
<span class="lbl b" style="left:284.0px;top:685.1px;">Y</span>
<svg class="abs" style="left:299.4000000000001px;top:685px" width="15" height="14" viewBox="0 0 15 14"><path d="M5.6,2 H3.2 Q1.6,2 1.6,3.6 V10.4 Q1.6,12 3.2,12 H5.6 M9.4,2 H11.8 Q13.4,2 13.4,3.6 V10.4 Q13.4,12 11.8,12 H9.4" fill="none" stroke="#000" stroke-width="1.9"/><path d="M7.5,0.6 V13.4" stroke="#1c1c1c" stroke-width="1.2" stroke-dasharray="2 1.6"/></svg>
<span class="lbl b" style="left:356.4px;top:685.1px;">Z</span>
<svg class="abs" style="left:371.8000000000002px;top:685px" width="15" height="14" viewBox="0 0 15 14"><path d="M5.6,2 H3.2 Q1.6,2 1.6,3.6 V10.4 Q1.6,12 3.2,12 H5.6 M9.4,2 H11.8 Q13.4,2 13.4,3.6 V10.4 Q13.4,12 11.8,12 H9.4" fill="none" stroke="#000" stroke-width="1.9"/><path d="M7.5,0.6 V13.4" stroke="#1c1c1c" stroke-width="1.2" stroke-dasharray="2 1.6"/></svg>
<span class="lbl " style="left:10.0px;top:716.9px;">Position:</span>
<div class="inp" style="left:193px;top:712.3px;height:24.4px;width:69px"><span class="num" style="top:3.6px;left:4.6px">125</span></div>
<div class="inp" style="left:265px;top:712.3px;height:24.4px;width:69px"><span class="num" style="top:3.6px;left:4.6px">110</span></div>
<div class="inp" style="left:337px;top:712.3px;height:24.4px;width:69px"><span class="num" style="top:3.6px;left:4.6px">30</span></div>
<span class="lbl " style="left:409.3px;top:716.9px;">mm</span>
<span class="lbl " style="left:10.0px;top:753.9px;">Rotate (relative):</span>
<div class="inp" style="left:193px;top:749.3px;height:24.4px;width:69px"><span class="num" style="top:3.6px;left:4.6px">0</span></div>
<div class="inp" style="left:265px;top:749.3px;height:24.4px;width:69px"><span class="num" style="top:3.6px;left:4.6px">0</span></div>
<div class="inp" style="left:337px;top:749.3px;height:24.4px;width:69px"><span class="num" style="top:3.6px;left:4.6px">0</span></div>
<span class="lbl " style="left:409.3px;top:753.9px;">°</span>
<span class="lbl " style="left:30.0px;top:790.9px;">Scale factors:</span>
<div class="inp" style="left:193px;top:786.3px;height:24.4px;width:69px"><span class="num" style="top:3.6px;left:4.6px">100</span></div>
<div class="inp" style="left:265px;top:786.3px;height:24.4px;width:69px"><span class="num" style="top:3.6px;left:4.6px">100</span></div>
<div class="inp" style="left:337px;top:786.3px;height:24.4px;width:69px"><span class="num" style="top:3.6px;left:4.6px">100</span></div>
<span class="lbl " style="left:409.3px;top:790.9px;">%</span>
<span class="lbl " style="left:30.0px;top:827.9px;">Size [World]:</span>
<div class="inp" style="left:193px;top:823.3px;height:24.4px;width:69px"><span class="num" style="top:3.6px;left:4.6px">236</span></div>
<div class="inp" style="left:265px;top:823.3px;height:24.4px;width:69px"><span class="num" style="top:3.6px;left:4.6px">206</span></div>
<div class="inp" style="left:337px;top:823.3px;height:24.4px;width:69px"><span class="num" style="top:3.6px;left:4.6px">60</span></div>
<span class="lbl " style="left:409.3px;top:827.9px;">mm</span>
<svg class="abs" style="left:11.2px;top:809.0px" width="14" height="16" viewBox="0 0 14 16"><path d="M3.1,8.4 V5.6 A3.9,3.9 0 0 1 10.9,5.6 V8.4" fill="none" stroke="#fbfbfb" stroke-width="2.1"/><rect x="0.9" y="7.7" width="12.2" height="7.3" rx="1.2" fill="#fbfbfb"/><path d="M5.4,11.5 H9" stroke="#2d2d2d" stroke-width="1.2"/><circle cx="6.4" cy="11.5" r="1.2" fill="#2d2d2d"/></svg>
<div class="abs" style="left:12.299999999999955px;top:857.5px;width:13.5px;height:13.5px;border:1px solid #4e4e4e;background:#303030"></div>
<span class="lbl " style="left:29.3px;top:856.9px;">Inches</span>
<div class="abs" style="left:6px;top:893px;width:492px;height:66.5px;border:1px solid #222222;border-left:none"></div>
<span class="lbl b" style="left:4px;top:884.6px;background:#2f2f2f;padding:0 3px 0 2px">Info</span>
<span class="lbl " style="left:6.0px;top:901.4px;">Size:</span>
<span class="lbl " style="left:67.3px;top:901.4px;letter-spacing:-0.36px">236.00 x 206.00 x 60.00</span>
<span class="lbl " style="left:239.0px;top:901.4px;">Volume:</span>
<span class="lbl num" style="left:308.3px;top:901.4px;">192760.38</span>
<span class="lbl " style="left:6.0px;top:923.4px;">Facets:</span>
<span class="lbl " style="left:67.3px;top:923.4px;">3308 (2 shells)</span>
<svg class="abs" style="left:8.400000000000091px;top:944px" width="16" height="15" viewBox="0 0 16 15"><path d="M8,1.4 L14.8,13.6 H1.2 Z" fill="none" stroke="#f4f4f4" stroke-width="1.3" stroke-linejoin="round"/><path d="M8,5.6 V9.6" stroke="#f4f4f4" stroke-width="1.4"/><circle cx="8" cy="11.6" r="0.9" fill="#f4f4f4"/></svg>
<span class="lbl " style="left:26.4px;top:944.4px;">Auto-repaired 2 errors</span>
<div class="abs b" style="left:6.2999999999999545px;top:967px;width:491px;height:34.5px;border:1px solid #181818;border-radius:5px;background:#333333;text-align:center;line-height:31.6px;letter-spacing:0.12px">Slice now</div>
</div>
</body></html>
